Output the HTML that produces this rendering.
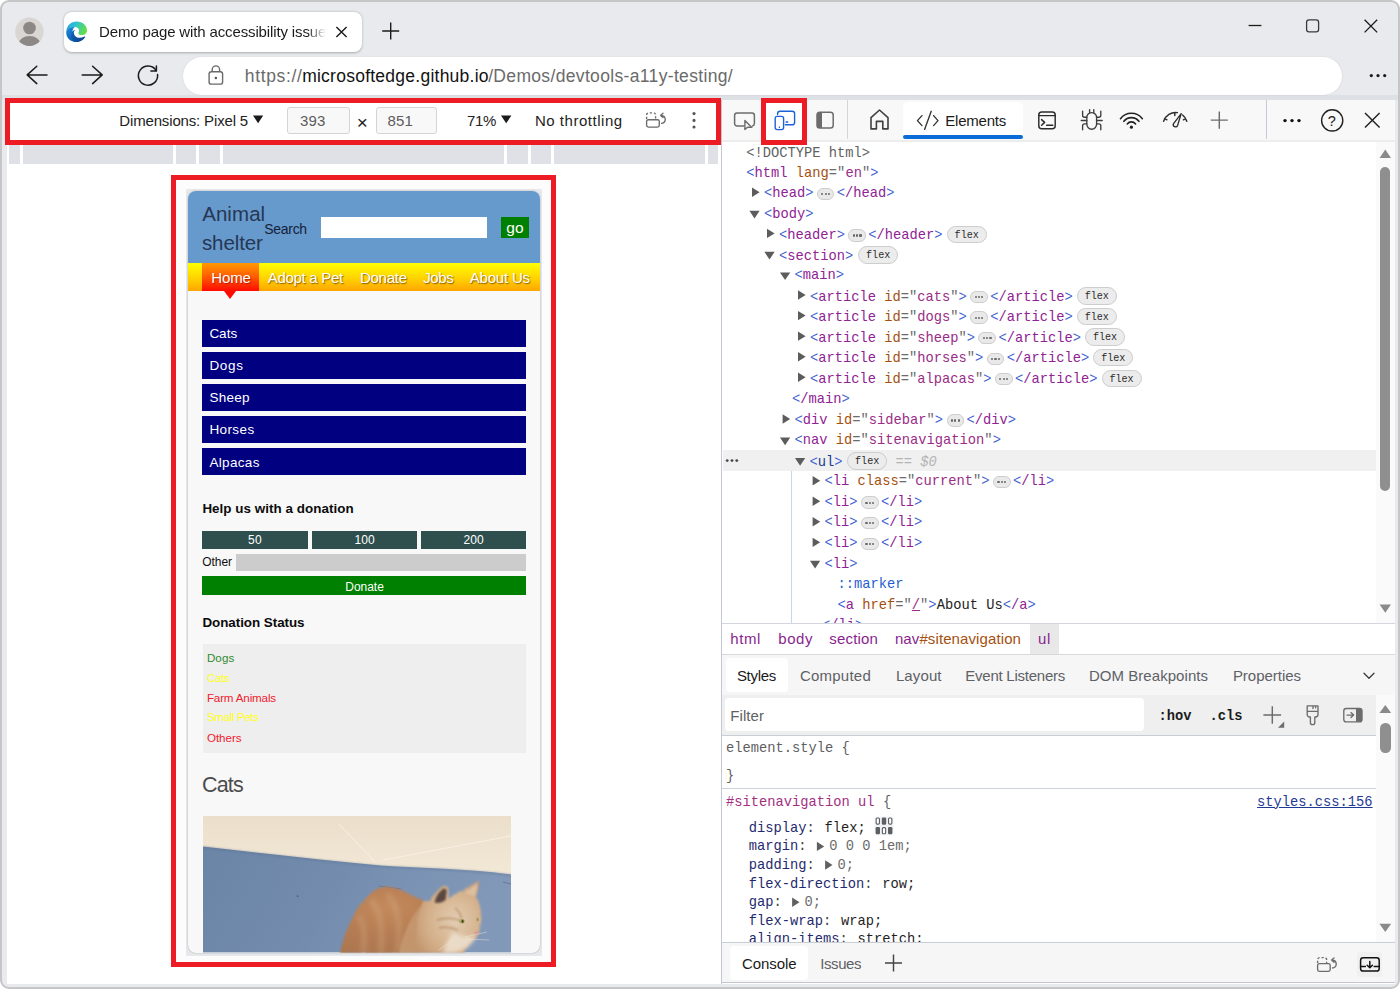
<!DOCTYPE html>
<html lang="en">
<head>
<meta charset="utf-8">
<title>Demo page with accessibility issues - DevTools device emulation</title>
<style>
html,body{margin:0;padding:0;background:#fff;}
body{width:1400px;height:989px;overflow:hidden;position:relative;font-family:"Liberation Sans", Arial, sans-serif;}
.t{position:absolute;white-space:pre;margin:0;padding:0;}
#win{position:absolute;left:0;top:0;width:1400px;height:989px;box-sizing:border-box;border:2px solid #c6c6c6;border-radius:9px;background:#e8eaed;overflow:hidden;}
#root{position:absolute;left:0;top:0;width:1400px;height:989px;overflow:hidden;}
.row{position:absolute;white-space:pre;font-family:"Liberation Mono", "DejaVu Sans Mono", monospace;font-size:13.75px;height:20.55px;line-height:20.55px;color:#222;}
.b{color:#3f5fd0}.tg{color:#8f2394}.an{color:#a5500f}.eq{color:#6b6b6b}.av{color:#9a2d86}
.pill{letter-spacing:0;display:inline-block;box-sizing:border-box;vertical-align:middle;width:17.6px;height:12.4px;border:1px solid #cdcdcd;background:#e9e9e9;border-radius:6.2px;margin:0 2.4px 2px 3.4px;position:relative;top:1.4px;}
.pill i{position:absolute;top:4.2px;width:2.2px;height:2.2px;border-radius:1.1px;background:#686868;}
.flex{display:inline-block;box-sizing:border-box;vertical-align:middle;width:40px;height:17.4px;line-height:18.6px;border:1px solid #cdcdcd;background:#ececec;border-radius:9px;margin:0 0 2.5px 4.1px;position:relative;top:0.6px;font-size:10.1px;text-align:center;color:#2b2b2b;letter-spacing:0;}
.tri{position:absolute;width:0;height:0;}
</style>
</head>
<body>
<div id="win"></div>
<div id="root">
<div style="position:absolute;left:2.00px;top:95.00px;width:1396.00px;height:4.50px;background:#dde0e5;"></div>
<div style="position:absolute;left:63.70px;top:11.80px;width:298.00px;height:40.20px;background:#fff;border-radius:8px;box-shadow:0 0.5px 2.5px rgba(0,0,0,.28);"></div>
<div style="position:absolute;left:95.00px;top:18.00px;width:232.00px;height:26.00px;overflow:hidden;-webkit-mask-image:linear-gradient(90deg,#000 0,#000 212px,transparent 231px);mask-image:linear-gradient(90deg,#000 0,#000 212px,transparent 231px);"><div class="t" id="tabtitle" style="left:4.00px;top:4.35px;height:19.50px;line-height:19.50px;font-size:15.00px;color:#1b1b1b;letter-spacing:-0.135px;">Demo page with accessibility issues</div></div>
<div style="position:absolute;left:183.00px;top:57.00px;width:1159.00px;height:38.00px;background:#fff;border-radius:19px;box-shadow:0 0 2px rgba(0,0,0,.10);"></div>
<div class="t" id="url1" style="left:244.85px;top:64.56px;height:22.75px;line-height:22.75px;font-size:17.50px;color:#6a6a6a;letter-spacing:0.643px;">https://</div>
<div class="t" id="url2" style="left:302.15px;top:64.56px;height:22.75px;line-height:22.75px;font-size:17.50px;color:#111;letter-spacing:0.249px;">microsoftedge.github.io</div>
<div class="t" id="url3" style="left:488.15px;top:64.56px;height:22.75px;line-height:22.75px;font-size:17.50px;color:#6a6a6a;letter-spacing:0.338px;">/Demos/devtools-a11y-testing/</div><svg style="position:absolute;left:0;top:0;pointer-events:none;" width="1400" height="989" viewBox="0 0 1400 989"><circle cx="29.4" cy="31.8" r="14.2" fill="#d9d6d3"/><clipPath id="avc"><circle cx="29.4" cy="31.8" r="14.2"/></clipPath><circle cx="29.5" cy="28" r="6.3" fill="#8b8886"/><ellipse cx="29.5" cy="43.8" rx="10.6" ry="7.8" fill="#8b8886" clip-path="url(#avc)"/><defs>
<linearGradient id="eg1" x1="0" y1="0" x2="1" y2="0.35"><stop offset="0" stop-color="#1e9fe6"/><stop offset="0.45" stop-color="#2cc3d5"/><stop offset="1" stop-color="#62dd4e"/></linearGradient>
<linearGradient id="eg2" x1="0" y1="0" x2="0.6" y2="1"><stop offset="0" stop-color="#1a8fe0"/><stop offset="1" stop-color="#0c55a8"/></linearGradient>
<linearGradient id="eg3" x1="0" y1="0" x2="1" y2="1"><stop offset="0" stop-color="#1467bf"/><stop offset="1" stop-color="#0b3f8a"/></linearGradient>
</defs><g transform="translate(66,21.6)"><path d="M0.3 9.6 C0.8 4 5.2 0 10.6 0 C16.8 0 21 4.2 21 8.6 C21 11.6 18.8 13.5 16 13.5 C13.6 13.5 12.3 12.7 12.3 11.7 C12.3 10.9 13.1 10.5 13.1 9.1 C13.1 7.1 11.3 5.4 8.7 5.4 C4.9 5.4 1.4 7.4 0.3 9.6Z" fill="url(#eg1)"/><path d="M0.3 9.6 C1.6 6.6 5 5.2 8.7 5.4 C7.2 6.3 6.3 8.4 6.4 10.8 C6.6 15.2 9.6 18.6 13.6 19.4 C12.4 20.2 11 20.5 9.8 20.4 C4 20.2 -0.4 15.6 0.3 9.6Z" fill="url(#eg2)"/><path d="M9.4 7.8 C8 8.8 7.4 10.8 8.2 12.8 C9.6 16.2 14 17.4 18.4 15 C18.9 14.7 19.4 15.2 19.1 15.7 C17.2 18.9 13.6 20.6 9.8 20.4 C6.8 19.8 5 16.6 5.2 12.8 C5.4 10.4 7.2 8.4 9.4 7.8Z" fill="url(#eg3)"/></g><path d="M336.4 26.9 L346.6 37.1 M346.6 26.9 L336.4 37.1" stroke="#1b1b1b" stroke-width="1.4" fill="none"/><path d="M382.2 31 H399.2 M390.7 22.5 V39.5" stroke="#1b1b1b" stroke-width="1.4" fill="none"/><path d="M1248.6 25.5 H1261.4" stroke="#1b1b1b" stroke-width="1.3" fill="none"/><rect x="1306.6" y="19.9" width="12" height="12" rx="2.4" stroke="#3a3a3a" stroke-width="1.3" fill="none"/><path d="M1364.6 19.8 L1377.2 32.4 M1377.2 19.8 L1364.6 32.4" stroke="#1b1b1b" stroke-width="1.3" fill="none"/><path d="M47 74.9 H27.6 M36.8 66.2 L27.2 74.9 L36.8 83.6" stroke="#1b1b1b" stroke-width="1.5" fill="none" stroke-linecap="round" stroke-linejoin="round"/><path d="M82.2 74.9 H101.8 M92.6 66.2 L102.2 74.9 L92.6 83.6" stroke="#1b1b1b" stroke-width="1.5" fill="none" stroke-linecap="round" stroke-linejoin="round"/><path d="M157.56 74.6 A9.6 9.6 0 1 1 156.2 70.6" stroke="#1b1b1b" stroke-width="1.5" fill="none" stroke-linecap="round" stroke-linejoin="round"/><path d="M156.4 65.9 V71 H150.9" stroke="#1b1b1b" stroke-width="1.5" fill="none" stroke-linecap="round" stroke-linejoin="round"/><rect x="209.1" y="71.7" width="13.5" height="12.4" rx="2.2" stroke="#6a6a6a" stroke-width="1.4" fill="none" stroke-linejoin="round"/><path d="M212.2 71.5 V69.6 A3.7 3.7 0 0 1 219.6 69.6 V71.5" stroke="#6a6a6a" stroke-width="1.4" fill="none" stroke-linejoin="round"/><circle cx="215.9" cy="78" r="1.25" fill="#555"/><circle cx="1371.3" cy="75.6" r="1.6" fill="#1b1b1b"/><circle cx="1378" cy="75.6" r="1.6" fill="#1b1b1b"/><circle cx="1384.7" cy="75.6" r="1.6" fill="#1b1b1b"/></svg><div style="position:absolute;left:7.00px;top:99.50px;width:714.50px;height:884.50px;background:#fff;"></div>
<div style="position:absolute;left:9.00px;top:144.40px;width:709.00px;height:19.20px;background:#dfe1e6;"><div style="position:absolute;left:11.00px;top:0.00px;width:2.50px;height:19.20px;background:#fff;"></div>
<div style="position:absolute;left:164.00px;top:0.00px;width:3.00px;height:19.20px;background:#fff;"></div>
<div style="position:absolute;left:187.00px;top:0.00px;width:2.50px;height:19.20px;background:#fff;"></div>
<div style="position:absolute;left:211.00px;top:0.00px;width:3.00px;height:19.20px;background:#fff;"></div>
<div style="position:absolute;left:495.00px;top:0.00px;width:3.00px;height:19.20px;background:#fff;"></div>
<div style="position:absolute;left:519.30px;top:0.00px;width:2.50px;height:19.20px;background:#fff;"></div>
<div style="position:absolute;left:542.00px;top:0.00px;width:3.00px;height:19.20px;background:#fff;"></div>
<div style="position:absolute;left:696.00px;top:0.00px;width:3.00px;height:19.20px;background:#fff;"></div></div>
<div class="t" id="dim" style="left:119.30px;top:111.45px;height:19.50px;line-height:19.50px;font-size:15.00px;color:#222;letter-spacing:-0.156px;">Dimensions: Pixel 5</div>
<div style="position:absolute;left:287.40px;top:107.40px;width:62.20px;height:26.60px;box-sizing:border-box;border:1px solid #d4d4d4;border-radius:3px;background:#f8f8f8;"></div>
<div class="t" id="w393" style="left:300.10px;top:111.45px;height:19.50px;line-height:19.50px;font-size:15.00px;color:#5c5c5c;letter-spacing:0.106px;">393</div>
<div class="t" id="times" style="left:356.86px;top:111.07px;height:24.70px;line-height:24.70px;font-size:19.00px;color:#222;letter-spacing:0.361px;">×</div>
<div style="position:absolute;left:376.00px;top:107.40px;width:60.60px;height:26.60px;box-sizing:border-box;border:1px solid #d4d4d4;border-radius:3px;background:#f8f8f8;"></div>
<div class="t" id="h851" style="left:387.50px;top:111.45px;height:19.50px;line-height:19.50px;font-size:15.00px;color:#5c5c5c;letter-spacing:0.173px;">851</div>
<div class="t" id="zoom" style="left:466.90px;top:111.45px;height:19.50px;line-height:19.50px;font-size:15.00px;color:#222;letter-spacing:-0.294px;">71%</div>
<div class="t" id="throt" style="left:534.90px;top:111.45px;height:19.50px;line-height:19.50px;font-size:15.00px;color:#222;letter-spacing:0.529px;">No throttling</div><svg style="position:absolute;left:0;top:0;pointer-events:none;" width="1400" height="989" viewBox="0 0 1400 989"><path d="M253 115.6 H263.2 L258.1 123.2 Z" fill="#1b1b1b"/><path d="M501 115.6 H511.4 L506.2 123.2 Z" fill="#1b1b1b"/><rect x="646.6" y="119.7" width="12.7" height="7.4" rx="1.8" stroke="#6a6a6a" stroke-width="1.35" fill="none" stroke-linejoin="round" stroke-linecap="round"/><path d="M646.6 119 V114.6 A2 2 0 0 1 648.6 112.9 H653.6 A2 2 0 0 1 655.6 114.6 V119" stroke="#6a6a6a" stroke-width="1.35" fill="none" stroke-dasharray="2.2 1.9"/><path d="M661.6 123.4 C666.6 122.6 666.4 115.8 661.2 115.4 M663 113.3 L660.6 115.4 L663 117.6" stroke="#6a6a6a" stroke-width="1.35" fill="none" stroke-linejoin="round" stroke-linecap="round"/><circle cx="694" cy="113.6" r="1.55" fill="#555"/><circle cx="694" cy="120.4" r="1.55" fill="#555"/><circle cx="694" cy="127" r="1.55" fill="#555"/></svg><div style="position:absolute;left:5.00px;top:97.80px;width:716.00px;height:47.00px;box-sizing:border-box;border:5px solid #ed1c24;"></div>
<div style="position:absolute;left:176.00px;top:180.00px;width:375.00px;height:782.00px;background:#fcfcfc;"></div>
<div style="position:absolute;left:186.00px;top:189.00px;width:356.00px;height:766.70px;background:#e6e8eb;overflow:hidden;"><div style="position:absolute;left:2.00px;top:2.30px;width:351.60px;height:762.00px;background:#f8f8f8;border-radius:8px;box-shadow:0 0 1.5px rgba(0,0,0,.35);"></div>
<div style="position:absolute;left:2.00px;top:2.30px;width:351.60px;height:72.00px;background:#6699cc;border-radius:8px 8px 0 0;"></div>
<div class="t" id="logo1" style="left:16.17px;top:11.97px;height:26.65px;line-height:26.65px;font-size:20.50px;color:#263754;letter-spacing:0.066px;font-weight:300;">Animal</div>
<div class="t" id="logo2" style="left:15.97px;top:40.97px;height:26.65px;line-height:26.65px;font-size:20.50px;color:#263754;letter-spacing:-0.095px;font-weight:300;">shelter</div>
<div class="t" id="search" style="left:78.36px;top:30.85px;height:18.20px;line-height:18.20px;font-size:14.00px;color:#14213a;letter-spacing:-0.323px;">Search</div>
<div style="position:absolute;left:135.00px;top:28.40px;width:166.00px;height:20.60px;background:#fff;"></div>
<div style="position:absolute;left:315.40px;top:28.40px;width:27.60px;height:20.60px;background:#008000;"></div>
<div class="t" id="go" style="left:320.27px;top:28.95px;height:20.15px;line-height:20.15px;font-size:15.50px;color:#fff;letter-spacing:0.182px;">go</div>
<div style="position:absolute;left:2.00px;top:74.00px;width:351.60px;height:28.00px;background:linear-gradient(#ffff00,#ffd200 55%,#ffa500);"></div>
<div style="position:absolute;left:16.40px;top:74.00px;width:56.20px;height:28.00px;background:linear-gradient(#ff9a00,#ff5a00 50%,#ff0a00);"></div>
<div style="position:absolute;left:37.60px;top:102.00px;width:0.00px;height:0.00px;width:0;height:0;border-left:6px solid transparent;border-right:6px solid transparent;border-top:8.2px solid #ff0a00;"></div>
<div class="t" id="n1" style="left:25.30px;top:79.05px;height:19.50px;line-height:19.50px;font-size:15.00px;color:#fff;letter-spacing:-0.116px;text-shadow:0.8px 0.8px 1.2px rgba(120,0,0,.6);">Home</div>
<div class="t" id="n2" style="left:81.70px;top:79.05px;height:19.50px;line-height:19.50px;font-size:15.00px;color:#fff;letter-spacing:-0.296px;text-shadow:0.8px 0.8px 1.2px rgba(90,50,0,.75);">Adopt a Pet</div>
<div class="t" id="n3" style="left:173.90px;top:79.05px;height:19.50px;line-height:19.50px;font-size:15.00px;color:#fff;letter-spacing:-0.237px;text-shadow:0.8px 0.8px 1.2px rgba(90,50,0,.75);">Donate</div>
<div class="t" id="n4" style="left:237.30px;top:79.05px;height:19.50px;line-height:19.50px;font-size:15.00px;color:#fff;letter-spacing:-0.434px;text-shadow:0.8px 0.8px 1.2px rgba(90,50,0,.75);">Jobs</div>
<div class="t" id="n5" style="left:283.70px;top:79.05px;height:19.50px;line-height:19.50px;font-size:15.00px;color:#fff;letter-spacing:-0.194px;text-shadow:0.8px 0.8px 1.2px rgba(90,50,0,.75);">About Us</div>
<div style="position:absolute;left:16.40px;top:131.00px;width:323.60px;height:27.00px;background:#000080;"></div>
<div class="t" id="cat0" style="left:23.39px;top:136.15px;height:17.55px;line-height:17.55px;font-size:13.50px;color:#fff;">Cats</div>
<div style="position:absolute;left:16.40px;top:163.10px;width:323.60px;height:27.00px;background:#000080;"></div>
<div class="t" id="cat1" style="left:23.39px;top:168.25px;height:17.55px;line-height:17.55px;font-size:13.50px;color:#fff;letter-spacing:0.710px;">Dogs</div>
<div style="position:absolute;left:16.40px;top:195.20px;width:323.60px;height:27.00px;background:#000080;"></div>
<div class="t" id="cat2" style="left:23.39px;top:200.35px;height:17.55px;line-height:17.55px;font-size:13.50px;color:#fff;letter-spacing:0.262px;">Sheep</div>
<div style="position:absolute;left:16.40px;top:227.30px;width:323.60px;height:27.00px;background:#000080;"></div>
<div class="t" id="cat3" style="left:23.39px;top:232.45px;height:17.55px;line-height:17.55px;font-size:13.50px;color:#fff;letter-spacing:0.398px;">Horses</div>
<div style="position:absolute;left:16.40px;top:259.40px;width:323.60px;height:27.00px;background:#000080;"></div>
<div class="t" id="cat4" style="left:23.39px;top:264.55px;height:17.55px;line-height:17.55px;font-size:13.50px;color:#fff;letter-spacing:0.332px;">Alpacas</div>
<div class="t" id="help" style="left:16.40px;top:311.05px;height:17.42px;line-height:17.42px;font-size:13.40px;color:#0b0b0b;font-weight:700;letter-spacing:0.046px;">Help us with a donation</div>
<div style="position:absolute;left:16.40px;top:341.60px;width:105.20px;height:18.80px;background:#2f4f4f;"></div>
<div class="t" id="amt0" style="left:61.98px;top:343.84px;height:15.60px;line-height:15.60px;font-size:12.00px;color:#fff;letter-spacing:0.400px;">50</div>
<div style="position:absolute;left:126.00px;top:341.60px;width:105.00px;height:18.80px;background:#2f4f4f;"></div>
<div class="t" id="amt1" style="left:168.48px;top:343.84px;height:15.60px;line-height:15.60px;font-size:12.00px;color:#fff;letter-spacing:0.043px;">100</div>
<div style="position:absolute;left:235.20px;top:341.60px;width:104.80px;height:18.80px;background:#2f4f4f;"></div>
<div class="t" id="amt2" style="left:277.48px;top:343.84px;height:15.60px;line-height:15.60px;font-size:12.00px;color:#fff;letter-spacing:0.110px;">200</div>
<div class="t" id="other" style="left:16.28px;top:365.84px;height:15.60px;line-height:15.60px;font-size:12.00px;color:#111;letter-spacing:-0.051px;">Other</div>
<div style="position:absolute;left:50.00px;top:365.00px;width:290.00px;height:17.00px;background:#cccccc;"></div>
<div style="position:absolute;left:16.40px;top:387.40px;width:323.60px;height:19.00px;background:#008000;"></div>
<div class="t" id="donate" style="left:159.28px;top:391.14px;height:15.60px;line-height:15.60px;font-size:12.00px;color:#fff;letter-spacing:-0.024px;">Donate</div>
<div class="t" id="dstat" style="left:16.40px;top:425.05px;height:17.42px;line-height:17.42px;font-size:13.40px;color:#0b0b0b;font-weight:700;letter-spacing:-0.035px;">Donation Status</div>
<div style="position:absolute;left:17.00px;top:455.40px;width:323.00px;height:109.00px;background:#eeeeee;"></div>
<div class="t" id="ds0" style="left:20.90px;top:460.84px;height:15.08px;line-height:15.08px;font-size:11.60px;color:#2e8b2e;letter-spacing:0.107px;">Dogs</div>
<div class="t" id="ds1" style="left:20.90px;top:480.84px;height:15.08px;line-height:15.08px;font-size:11.60px;color:#ffff1a;letter-spacing:-0.384px;">Cats</div>
<div class="t" id="ds2" style="left:20.90px;top:501.24px;height:15.08px;line-height:15.08px;font-size:11.60px;color:#f0202e;letter-spacing:-0.147px;">Farm Animals</div>
<div class="t" id="ds3" style="left:20.90px;top:520.44px;height:15.08px;line-height:15.08px;font-size:11.60px;color:#ffff1a;letter-spacing:-0.371px;">Small Pets</div>
<div class="t" id="ds4" style="left:20.90px;top:541.44px;height:15.08px;line-height:15.08px;font-size:11.60px;color:#f0202e;letter-spacing:-0.015px;">Others</div>
<div class="t" id="h2cats" style="left:15.91px;top:582.78px;height:27.95px;line-height:27.95px;font-size:21.50px;color:#4c4c4c;letter-spacing:-0.806px;font-weight:300;">Cats</div><svg style="position:absolute;left:16.70px;top:627.30px;" width="308.8" height="136.4" viewBox="0 0 308.8 136.4"><defs>
<linearGradient id="flr" x1="0" y1="0" x2="1" y2="0.25"><stop offset="0" stop-color="#6a84a6"/><stop offset="0.5" stop-color="#738cae"/><stop offset="1" stop-color="#8198b8"/></linearGradient>
<linearGradient id="wal" x1="0" y1="0" x2="0" y2="1"><stop offset="0" stop-color="#ebdfcb"/><stop offset="1" stop-color="#f2e8d6"/></linearGradient>
<radialGradient id="fur" cx="0.38" cy="0.3" r="0.85"><stop offset="0" stop-color="#c48a5c"/><stop offset="0.55" stop-color="#b47b52"/><stop offset="1" stop-color="#a8754f"/></radialGradient>
<radialGradient id="hd" cx="0.6" cy="0.55" r="0.75"><stop offset="0" stop-color="#e3cdb2"/><stop offset="0.6" stop-color="#d3ae88"/><stop offset="1" stop-color="#bf9068"/></radialGradient>
<filter id="bl" x="-10%" y="-10%" width="120%" height="120%"><feGaussianBlur stdDeviation="0.8"/></filter>
<filter id="bl2" x="-20%" y="-20%" width="140%" height="140%"><feGaussianBlur stdDeviation="2.2"/></filter>
<filter id="fz" x="-10%" y="-10%" width="120%" height="120%"><feTurbulence type="fractalNoise" baseFrequency="0.5 0.2" numOctaves="2" seed="4" result="n"/><feDisplacementMap in="SourceGraphic" in2="n" scale="2.2"/><feGaussianBlur stdDeviation="0.9"/></filter>
</defs><rect width="308.8" height="136.4" fill="url(#flr)"/><path d="M0 0 H308.8 V58.4 C262 52.4 222 52 178 49.4 C120 44.4 60 37.2 0 30.6 Z" fill="url(#wal)"/><path d="M0 31.4 C60 38 120 45.2 178 50.2 C222 52.8 262 53.2 308.8 59.2" stroke="#586d8e" stroke-width="1.6" fill="none" opacity=".5" filter="url(#bl)"/><path d="M136 8 L172 46 M180 44 L308 20" stroke="#fbf6ec" stroke-width="0.9" fill="none" opacity=".75"/><path d="M176 70 L198 73 M300 66 L308 68" stroke="#4e5f7c" stroke-width="0.7" fill="none" opacity=".7"/><circle cx="94.6" cy="80.2" r="0.9" fill="#44546e" opacity=".8"/><g filter="url(#fz)"><path d="M137 137 C140 122 145 110 150.2 100.8 C154 92 158 86.6 163 82.3 C168 76.6 173 72.6 178.7 71.6 C186 70.4 192 71.6 197.3 73.7 C203 76 208 78.6 211.6 80.8 L224 86 L262 137 Z" fill="url(#fur)"/><path d="M196 137 C200 120 206 104 216 92 C224 86 236 88 244 96 L262 137 Z" fill="#c79a72" opacity=".85"/><path d="M168 84 C176 92 180 108 178 137 M184 78 C196 90 198 112 194 137 M156 100 C162 110 162 124 160 137" stroke="#dcb791" stroke-width="5" fill="none" opacity=".3" filter="url(#bl2)"/><path d="M220.2 85.1 L227.3 85.1 C230 79 235 73.4 240.2 70.1 C242.6 69.4 244.6 70.4 245.2 72.3 L245.9 83 C249 80 252 78 254.4 76.6 L260.2 74.4 L275.9 64.4 C276 70 274.6 76 273 80.8 C276.4 86.4 278 92.6 278 99.4 C278.6 106 277.6 112.6 275.2 118 C273 123 269.6 126 265.9 128 L260.2 137 H214 C212 120 214 100 220.2 85.1 Z" fill="url(#hd)"/></g><path d="M231.6 86.6 C232.6 80.6 236.4 74.8 241 72.4 C243 72.4 243.8 74 243.6 76 L242.6 84 C239 86.6 235.6 87.4 231.6 86.6 Z" fill="#5c4740" filter="url(#bl)"/><path d="M262 77.2 L274.2 67.6 C274 72 273 76.6 271.4 80 Z" fill="#dcc0a2" filter="url(#bl)"/><path d="M234 104 C242 101 250 102 257 104.4 M236 112 C243 110.4 250 112 255 114.4 M252 92 C256 95 258 99 258.6 103" stroke="#a87850" stroke-width="1.5" fill="none" opacity=".65" filter="url(#bl)"/><ellipse cx="258.9" cy="105.2" rx="2.9" ry="2.3" fill="#b3aa66"/><ellipse cx="259.6" cy="105.2" rx="1" ry="1.7" fill="#4a4226"/><ellipse cx="274.6" cy="103.6" rx="1.2" ry="1.8" fill="#9f9858"/><path d="M271.6 116 C273 114.8 275.6 115 276.2 117.2 C275.4 119.4 273.2 119.8 271.6 118.4 Z" fill="#d59a96"/><path d="M250 116 C258 120 266 122 273 120 L268 128 C262 133 256 136 250 137 L240 137 C242 128 246 122 250 116 Z" fill="#efe4d4" opacity=".8" filter="url(#bl2)"/><path d="M262 121 L284 116 M262 123 L286 124 M250 124 L236 134" stroke="#f4eee4" stroke-width="0.6" fill="none" opacity=".7"/></svg></div>
<div style="position:absolute;left:171.00px;top:175.00px;width:385.00px;height:791.80px;box-sizing:border-box;border:5px solid #ed1c24;"></div>
<div style="position:absolute;left:721.50px;top:99.50px;width:673.50px;height:884.00px;background:#fff;"></div>
<div style="position:absolute;left:721.50px;top:99.50px;width:673.50px;height:40.00px;background:#f8f8f8;border-bottom:2px solid #ededed;box-sizing:content-box;"></div>
<div style="position:absolute;left:903.30px;top:102.40px;width:119.40px;height:36.40px;background:#fff;border-radius:5px 5px 0 0;"></div>
<div style="position:absolute;left:903.30px;top:134.80px;width:119.40px;height:3.90px;background:#0a6cd6;border-radius:2px;"></div>
<div class="t" id="elements" style="left:945.30px;top:111.45px;height:19.50px;line-height:19.50px;font-size:15.00px;color:#1b1b1b;letter-spacing:-0.223px;">Elements</div>
<div style="position:absolute;left:847.00px;top:100.00px;width:1.30px;height:39.00px;background:#d4d6dc;"></div>
<div style="position:absolute;left:1266.00px;top:100.00px;width:1.40px;height:39.00px;background:#c6c9d2;"></div>
<div style="position:absolute;left:766.00px;top:102.80px;width:36.00px;height:37.00px;background:#fff;"></div>
<div class="t" id="help_q" style="left:1327.73px;top:111.55px;height:18.85px;line-height:18.85px;font-size:14.50px;color:#222;">?</div>
<div style="position:absolute;left:761.00px;top:97.80px;width:46.00px;height:47.00px;box-sizing:border-box;border:5px solid #ed1c24;"></div>
<div style="position:absolute;left:721.50px;top:142.00px;width:654.20px;height:481.60px;overflow:hidden;"><div style="position:absolute;left:1.50px;top:308.00px;width:652.70px;height:20.60px;background:#f0f0f0;"></div>
<div style="position:absolute;left:69.50px;top:328.60px;width:1.00px;height:160.00px;background:#c9d6f2;"></div>
<div class="row" style="left:24.80px;top:1.57px;"><span style="color:#5f5f5f">&lt;!DOCTYPE html&gt;</span></div>
<div class="row" style="left:24.80px;top:22.12px;"><span class="b">&lt;</span><span class="tg">html</span> <span class="an">lang</span><span class="eq">="</span><span class="av">en</span><span class="eq">"</span><span class="b">&gt;</span></div>
<div class="row" style="left:42.40px;top:41.97px;"><span class="b">&lt;</span><span class="tg">head</span><span class="b">&gt;</span><span class="pill"><i style="left:3.4px"></i><i style="left:6.7px"></i><i style="left:10px"></i></span><span class="b">&lt;</span><span class="tg">/head</span><span class="b">&gt;</span></div>
<div class="row" style="left:42.40px;top:62.52px;"><span class="b">&lt;</span><span class="tg">body</span><span class="b">&gt;</span></div>
<div class="row" style="left:57.40px;top:83.07px;"><span class="b">&lt;</span><span class="tg">header</span><span class="b">&gt;</span><span class="pill"><i style="left:3.4px"></i><i style="left:6.7px"></i><i style="left:10px"></i></span><span class="b">&lt;</span><span class="tg">/header</span><span class="b">&gt;</span><span class="flex">flex</span></div>
<div class="row" style="left:57.40px;top:103.62px;"><span class="b">&lt;</span><span class="tg">section</span><span class="b">&gt;</span><span class="flex" style="margin-left:5px">flex</span></div>
<div class="row" style="left:73.00px;top:124.17px;"><span class="b">&lt;</span><span class="tg">main</span><span class="b">&gt;</span></div>
<div class="row" style="left:88.40px;top:144.72px;"><span class="b">&lt;</span><span class="tg">article</span> <span class="an">id</span><span class="eq">="</span><span class="av">cats</span><span class="eq">"</span><span class="b">&gt;</span><span class="pill"><i style="left:3.4px"></i><i style="left:6.7px"></i><i style="left:10px"></i></span><span class="b">&lt;</span><span class="tg">/article</span><span class="b">&gt;</span><span class="flex">flex</span></div>
<div class="row" style="left:88.40px;top:165.27px;"><span class="b">&lt;</span><span class="tg">article</span> <span class="an">id</span><span class="eq">="</span><span class="av">dogs</span><span class="eq">"</span><span class="b">&gt;</span><span class="pill"><i style="left:3.4px"></i><i style="left:6.7px"></i><i style="left:10px"></i></span><span class="b">&lt;</span><span class="tg">/article</span><span class="b">&gt;</span><span class="flex">flex</span></div>
<div class="row" style="left:88.40px;top:185.82px;"><span class="b">&lt;</span><span class="tg">article</span> <span class="an">id</span><span class="eq">="</span><span class="av">sheep</span><span class="eq">"</span><span class="b">&gt;</span><span class="pill"><i style="left:3.4px"></i><i style="left:6.7px"></i><i style="left:10px"></i></span><span class="b">&lt;</span><span class="tg">/article</span><span class="b">&gt;</span><span class="flex">flex</span></div>
<div class="row" style="left:88.40px;top:206.37px;"><span class="b">&lt;</span><span class="tg">article</span> <span class="an">id</span><span class="eq">="</span><span class="av">horses</span><span class="eq">"</span><span class="b">&gt;</span><span class="pill"><i style="left:3.4px"></i><i style="left:6.7px"></i><i style="left:10px"></i></span><span class="b">&lt;</span><span class="tg">/article</span><span class="b">&gt;</span><span class="flex">flex</span></div>
<div class="row" style="left:88.40px;top:226.92px;"><span class="b">&lt;</span><span class="tg">article</span> <span class="an">id</span><span class="eq">="</span><span class="av">alpacas</span><span class="eq">"</span><span class="b">&gt;</span><span class="pill"><i style="left:3.4px"></i><i style="left:6.7px"></i><i style="left:10px"></i></span><span class="b">&lt;</span><span class="tg">/article</span><span class="b">&gt;</span><span class="flex">flex</span></div>
<div class="row" style="left:70.40px;top:248.17px;"><span class="b">&lt;</span><span class="tg">/main</span><span class="b">&gt;</span></div>
<div class="row" style="left:73.00px;top:268.72px;"><span class="b">&lt;</span><span class="tg">div</span> <span class="an">id</span><span class="eq">="</span><span class="av">sidebar</span><span class="eq">"</span><span class="b">&gt;</span><span class="pill"><i style="left:3.4px"></i><i style="left:6.7px"></i><i style="left:10px"></i></span><span class="b">&lt;</span><span class="tg">/div</span><span class="b">&gt;</span></div>
<div class="row" style="left:73.00px;top:289.27px;"><span class="b">&lt;</span><span class="tg">nav</span> <span class="an">id</span><span class="eq">="</span><span class="av">sitenavigation</span><span class="eq">"</span><span class="b">&gt;</span></div>
<div class="row" style="left:88.00px;top:309.82px;"><span class="b">&lt;</span><span style="color:#203a8f">ul</span><span class="b">&gt;</span><span class="flex" style="margin-left:4.6px">flex</span><span style="color:#b4b4b4"> == <i>$0</i></span></div>
<div class="row" style="left:103.00px;top:330.37px;"><span class="b">&lt;</span><span class="tg">li</span> <span class="an">class</span><span class="eq">="</span><span class="av">current</span><span class="eq">"</span><span class="b">&gt;</span><span class="pill"><i style="left:3.4px"></i><i style="left:6.7px"></i><i style="left:10px"></i></span><span class="b">&lt;</span><span class="tg">/li</span><span class="b">&gt;</span></div>
<div class="row" style="left:103.00px;top:350.92px;"><span class="b">&lt;</span><span class="tg">li</span><span class="b">&gt;</span><span class="pill"><i style="left:3.4px"></i><i style="left:6.7px"></i><i style="left:10px"></i></span><span class="b">&lt;</span><span class="tg">/li</span><span class="b">&gt;</span></div>
<div class="row" style="left:103.00px;top:371.47px;"><span class="b">&lt;</span><span class="tg">li</span><span class="b">&gt;</span><span class="pill"><i style="left:3.4px"></i><i style="left:6.7px"></i><i style="left:10px"></i></span><span class="b">&lt;</span><span class="tg">/li</span><span class="b">&gt;</span></div>
<div class="row" style="left:103.00px;top:392.02px;"><span class="b">&lt;</span><span class="tg">li</span><span class="b">&gt;</span><span class="pill"><i style="left:3.4px"></i><i style="left:6.7px"></i><i style="left:10px"></i></span><span class="b">&lt;</span><span class="tg">/li</span><span class="b">&gt;</span></div>
<div class="row" style="left:103.00px;top:412.57px;"><span class="b">&lt;</span><span class="tg">li</span><span class="b">&gt;</span></div>
<div class="row" style="left:116.00px;top:433.12px;"><span style="color:#1f5fcf">::marker</span></div>
<div class="row" style="left:116.00px;top:453.67px;"><span class="b">&lt;</span><span class="tg">a</span> <span class="an">href</span><span class="eq">="</span><span class="av" style="text-decoration:underline">/</span><span class="eq">"</span><span class="b">&gt;</span><span style="color:#222">About Us</span><span class="b">&lt;</span><span class="tg">/a</span><span class="b">&gt;</span></div>
<div class="row" style="left:100.40px;top:474.22px;"><span class="b">&lt;</span><span class="tg">/li</span><span class="b">&gt;</span></div></div>
<div style="position:absolute;left:1375.70px;top:142.00px;width:19.30px;height:481.60px;background:#fafafa;"></div>
<div style="position:absolute;left:1380.10px;top:167.40px;width:10.40px;height:323.80px;background:#8f8f8f;border-radius:5.2px;"></div>
<div style="position:absolute;left:721.50px;top:623.20px;width:673.50px;height:1.00px;background:#d3d6de;"></div>
<div style="position:absolute;left:721.50px;top:654.20px;width:673.50px;height:1.00px;background:#d9d9d9;"></div>
<div style="position:absolute;left:1029.60px;top:624.20px;width:29.80px;height:30.00px;background:#e8e8e8;"></div>
<div class="t" id="bc1" style="left:730.30px;top:629.45px;height:19.50px;line-height:19.50px;font-size:15.00px;color:#8a1f8e;letter-spacing:0.602px;">html</div>
<div class="t" id="bc2" style="left:778.30px;top:629.45px;height:19.50px;line-height:19.50px;font-size:15.00px;color:#8a1f8e;letter-spacing:0.555px;">body</div>
<div class="t" id="bc3" style="left:829.30px;top:629.45px;height:19.50px;line-height:19.50px;font-size:15.00px;color:#8a1f8e;letter-spacing:0.174px;">section</div>
<div class="t" id="bc4" style="left:894.90px;top:629.45px;height:19.50px;line-height:19.50px;font-size:15.00px;color:#8a1f8e;letter-spacing:0.105px;">nav<span style="color:#a5500f">#sitenavigation</span></div>
<div class="t" id="bc5" style="left:1037.90px;top:629.45px;height:19.50px;line-height:19.50px;font-size:15.00px;color:#8a1f8e;letter-spacing:0.731px;">ul</div>
<div style="position:absolute;left:721.50px;top:655.20px;width:673.50px;height:40.00px;background:#f6f6f6;"></div>
<div style="position:absolute;left:725.60px;top:657.60px;width:62.40px;height:34.00px;background:#fff;border-radius:4px;"></div>
<div class="t" id="tb1" style="left:736.90px;top:666.45px;height:19.50px;line-height:19.50px;font-size:15.00px;color:#1b1b1b;letter-spacing:-0.285px;">Styles</div>
<div class="t" id="tb2" style="left:799.90px;top:666.45px;height:19.50px;line-height:19.50px;font-size:15.00px;color:#5e6166;letter-spacing:0.241px;">Computed</div>
<div class="t" id="tb3" style="left:895.90px;top:666.45px;height:19.50px;line-height:19.50px;font-size:15.00px;color:#5e6166;letter-spacing:0.117px;">Layout</div>
<div class="t" id="tb4" style="left:965.30px;top:666.45px;height:19.50px;line-height:19.50px;font-size:15.00px;color:#5e6166;letter-spacing:-0.243px;">Event Listeners</div>
<div class="t" id="tb5" style="left:1088.90px;top:666.45px;height:19.50px;line-height:19.50px;font-size:15.00px;color:#5e6166;letter-spacing:0.052px;">DOM Breakpoints</div>
<div class="t" id="tb6" style="left:1232.90px;top:666.45px;height:19.50px;line-height:19.50px;font-size:15.00px;color:#5e6166;letter-spacing:-0.022px;">Properties</div>
<div style="position:absolute;left:721.50px;top:695.20px;width:654.50px;height:40.30px;background:#efefef;border-bottom:1px solid #c9cdd6;"></div>
<div style="position:absolute;left:725.00px;top:698.00px;width:418.60px;height:33.00px;background:#fff;border-radius:4px;"></div>
<div class="t" id="filter" style="left:730.30px;top:706.45px;height:19.50px;line-height:19.50px;font-size:15.00px;color:#5f5f5f;letter-spacing:0.068px;">Filter</div>
<div class="t" id="hov" style="left:1158.40px;top:707.79px;height:17.88px;line-height:17.88px;font-size:13.75px;color:#1b1b1b;font-weight:700;font-family:'Liberation Mono','DejaVu Sans Mono',monospace;">:hov</div>
<div class="t" id="cls" style="left:1209.50px;top:707.79px;height:17.88px;line-height:17.88px;font-size:13.75px;color:#1b1b1b;font-weight:700;font-family:'Liberation Mono','DejaVu Sans Mono',monospace;">.cls</div>
<div class="row" style="left:726.10px;top:739.94px;height:18.6px;line-height:18.6px;"><span style="color:#5f5f5f">element.style {</span></div>
<div class="row" style="left:726.10px;top:767.64px;height:18.6px;line-height:18.6px;"><span style="color:#5f5f5f">}</span></div>
<div style="position:absolute;left:721.50px;top:788.20px;width:654.50px;height:1.00px;background:#cdd1d9;"></div>
<div class="row" style="left:726.10px;top:793.74px;height:18.6px;line-height:18.6px;"><span style="color:#a3307f">#sitenavigation ul</span><span style="color:#5f5f5f"> {</span></div>
<div class="row" style="left:1257.10px;top:793.64px;height:18.6px;line-height:18.6px;"><span style="color:#1f3a93;text-decoration:underline">styles.css:156</span></div>
<div style="position:absolute;left:721.50px;top:810.00px;width:654.50px;height:132.00px;overflow:hidden;"><div class="row" style="left:27.20px;top:9.74px;height:18.6px;line-height:18.6px;"><span style="color:#1f2b6e">display</span><span style="color:#444">:</span><span style="color:#1f1f1f;margin-left:1.6px"> flex;</span></div>
<div class="row" style="left:27.20px;top:28.34px;height:18.6px;line-height:18.6px;"><span style="color:#1f2b6e">margin</span><span style="color:#444">:</span><span style="display:inline-block;width:22.9px"></span><span style="color:#6b6b6b">0 0 0 1em;</span></div>
<div class="row" style="left:27.20px;top:46.94px;height:18.6px;line-height:18.6px;"><span style="color:#1f2b6e">padding</span><span style="color:#444">:</span><span style="display:inline-block;width:22.9px"></span><span style="color:#6b6b6b">0;</span></div>
<div class="row" style="left:27.20px;top:65.54px;height:18.6px;line-height:18.6px;"><span style="color:#1f2b6e">flex-direction</span><span style="color:#444">:</span><span style="color:#1f1f1f;margin-left:1.6px"> row;</span></div>
<div class="row" style="left:27.20px;top:84.14px;height:18.6px;line-height:18.6px;"><span style="color:#1f2b6e">gap</span><span style="color:#444">:</span><span style="display:inline-block;width:22.9px"></span><span style="color:#6b6b6b">0;</span></div>
<div class="row" style="left:27.20px;top:102.74px;height:18.6px;line-height:18.6px;"><span style="color:#1f2b6e">flex-wrap</span><span style="color:#444">:</span><span style="color:#1f1f1f;margin-left:1.6px"> wrap;</span></div>
<div class="row" style="left:27.20px;top:121.34px;height:18.6px;line-height:18.6px;"><span style="color:#1f2b6e">align-items</span><span style="color:#444">:</span><span style="color:#1f1f1f;margin-left:1.6px"> stretch;</span></div></div>
<div style="position:absolute;left:1376.00px;top:695.20px;width:19.00px;height:246.80px;background:#fafafa;"></div>
<div style="position:absolute;left:1380.20px;top:723.40px;width:10.40px;height:29.80px;background:#8f8f8f;border-radius:5.2px;"></div>
<div style="position:absolute;left:721.50px;top:942.00px;width:673.50px;height:41.40px;box-sizing:border-box;background:#f6f6f6;border-top:1px solid #c9cdd6;border-bottom:1.4px solid #c2c5cc;"></div>
<div style="position:absolute;left:730.40px;top:946.00px;width:77.60px;height:34.00px;background:#fff;border-radius:4px;"></div>
<div class="t" id="dr1" style="left:741.90px;top:953.85px;height:19.50px;line-height:19.50px;font-size:15.00px;color:#1b1b1b;letter-spacing:-0.042px;">Console</div>
<div class="t" id="dr2" style="left:820.30px;top:953.85px;height:19.50px;line-height:19.50px;font-size:15.00px;color:#5e6166;letter-spacing:-0.435px;">Issues</div>
<div style="position:absolute;left:1357.40px;top:952.20px;width:24.40px;height:24.60px;background:#f0f0f0;border-radius:3px;"></div>
<div style="position:absolute;left:721.30px;top:99.50px;width:1.20px;height:884.00px;background:#c3c7d1;"></div><svg style="position:absolute;left:0;top:0;pointer-events:none;" width="1400" height="989" viewBox="0 0 1400 989"><path d="M744 126 H737 A2.4 2.4 0 0 1 734.6 123.6 V115.4 A2.4 2.4 0 0 1 737 113 H752 A2.4 2.4 0 0 1 754.4 115.4 V123.6 A2.4 2.4 0 0 1 752.6 125.9" stroke="#6c6c6c" stroke-width="1.5" fill="none" stroke-linejoin="round" stroke-linecap="round"/><path d="M744.9 120.4 V129.6 L747.6 127.2 L751.8 127.4 Z" stroke="#6c6c6c" stroke-width="1.4" fill="#f8f8f8" stroke-linejoin="round"/><path d="M777.6 114.6 V113.6 A2.4 2.4 0 0 1 780 111.2 H792.2 A2.4 2.4 0 0 1 794.6 113.6 V122.4 A2.4 2.4 0 0 1 792.2 124.8 H785.4" stroke="#1b62d9" stroke-width="1.4" fill="none" stroke-linejoin="round" stroke-linecap="round"/><rect x="775.2" y="116.4" width="8.4" height="13.2" rx="2" stroke="#1b62d9" stroke-width="1.4" fill="none" stroke-linejoin="round" stroke-linecap="round"/><path d="M785.6 122.1 H788.2 M778.8 127.2 H780" stroke="#1b62d9" stroke-width="1.5" fill="none"/><rect x="817" y="112.3" width="16.2" height="15.8" rx="2.8" stroke="#6c6c6c" stroke-width="1.5" fill="none" stroke-linejoin="round" stroke-linecap="round"/><path d="M819.8 112.3 H822 V128.1 H819.8 A2.8 2.8 0 0 1 817 125.3 V115.1 A2.8 2.8 0 0 1 819.8 112.3 Z" fill="#6c6c6c"/><path d="M879.5 110 L871 117.6 V128.9 H876.4 V121.4 H882.8 V128.9 H888 V117.6 Z" stroke="#404040" stroke-width="1.6" fill="none" stroke-linejoin="round"/><path d="M922 115.6 L917.4 120.6 L922 125.6 M924.6 129.4 L931.2 111.3 M933.6 115.6 L938 120.6 L933.6 125.6" stroke="#333" stroke-width="1.35" fill="none" stroke-linecap="round" stroke-linejoin="round"/><rect x="1038.8" y="112" width="16.4" height="16.8" rx="3" stroke="#2b2b2b" stroke-width="1.45" fill="none" stroke-linejoin="round" stroke-linecap="round"/><path d="M1038.8 115.6 H1055.2 M1041.6 119.6 L1044.6 122.4 L1041.6 125.2 M1046.6 125.2 H1052.8" stroke="#2b2b2b" stroke-width="1.45" fill="none" stroke-linejoin="round" stroke-linecap="round"/><rect x="1086.8" y="112.6" width="9.8" height="16.6" rx="4.9" stroke="#3c3c3c" stroke-width="1.35" fill="none" stroke-linejoin="round" stroke-linecap="round"/><path d="M1089.6 109.6 V112.9 M1093.8 109.6 V112.9 M1086.8 117.2 H1084.6 A2 2 0 0 1 1082.6 115.2 V111.2 M1096.6 117.2 H1098.8 A2 2 0 0 0 1100.8 115.2 V111.2 M1081.2 120.5 H1086.8 M1096.6 120.5 H1102.2 M1086.8 123.8 H1084.6 A2 2 0 0 0 1082.6 125.8 V129.8 M1096.6 123.8 H1098.8 A2 2 0 0 1 1100.8 125.8 V129.8" stroke="#3c3c3c" stroke-width="1.35" fill="none" stroke-linejoin="round" stroke-linecap="round"/><path d="M1127.22 123.94 A5.30 5.30 0 0 1 1135.58 123.94" stroke="#222" stroke-width="1.6" fill="none" stroke-linecap="round"/><path d="M1123.84 121.29 A9.60 9.60 0 0 1 1138.96 121.29" stroke="#222" stroke-width="1.6" fill="none" stroke-linecap="round"/><path d="M1120.45 118.64 A13.90 13.90 0 0 1 1142.35 118.64" stroke="#222" stroke-width="1.6" fill="none" stroke-linecap="round"/><circle cx="1131.4" cy="127.2" r="1.6" fill="#222"/><path d="M1163.6 121.2 A12.6 12.6 0 0 1 1177.4 112.6 M1182.6 115 A12.6 12.6 0 0 1 1186.8 121.2 M1164.6 118.6 L1167 119.8 M1174.8 113 V115.4 M1185.4 118.6 L1183.4 119.8" stroke="#2b2b2b" stroke-width="1.45" fill="none" stroke-linejoin="round" stroke-linecap="round"/><path d="M1181.2 113.6 L1177.6 125.4 A2.2 2.2 0 0 1 1173.4 123.8 Z" stroke="#2b2b2b" stroke-width="1.35" fill="none" stroke-linejoin="round"/><path d="M1210.8 120.1 H1227.8 M1219.3 111.6 V128.7" stroke="#6c6c6c" stroke-width="1.45" fill="none"/><circle cx="1285" cy="120.6" r="1.7" fill="#111"/><circle cx="1292" cy="120.6" r="1.7" fill="#111"/><circle cx="1299" cy="120.6" r="1.7" fill="#111"/><circle cx="1332.2" cy="120.4" r="10.6" stroke="#222" stroke-width="1.4" fill="none"/><path d="M1365 112.9 L1379.6 127.5 M1379.6 112.9 L1365 127.5" stroke="#222" stroke-width="1.45" fill="none"/><circle cx="727.2" cy="460.6" r="1.45" fill="#4a4a4a"/><circle cx="732" cy="460.6" r="1.45" fill="#4a4a4a"/><circle cx="736.8" cy="460.6" r="1.45" fill="#4a4a4a"/><path d="M752.00 187.60 v9.4 l7.6 -4.7 z" fill="#5c5c5c"/><path d="M749.40 210.75 h10.2 l-5.1 7.7 z" fill="#5c5c5c"/><path d="M767.00 228.70 v9.4 l7.6 -4.7 z" fill="#5c5c5c"/><path d="M764.40 251.85 h10.2 l-5.1 7.7 z" fill="#5c5c5c"/><path d="M780.00 272.40 h10.2 l-5.1 7.7 z" fill="#5c5c5c"/><path d="M798.00 290.35 v9.4 l7.6 -4.7 z" fill="#5c5c5c"/><path d="M798.00 310.90 v9.4 l7.6 -4.7 z" fill="#5c5c5c"/><path d="M798.00 331.45 v9.4 l7.6 -4.7 z" fill="#5c5c5c"/><path d="M798.00 352.00 v9.4 l7.6 -4.7 z" fill="#5c5c5c"/><path d="M798.00 372.55 v9.4 l7.6 -4.7 z" fill="#5c5c5c"/><path d="M782.60 414.35 v9.4 l7.6 -4.7 z" fill="#5c5c5c"/><path d="M780.00 437.50 h10.2 l-5.1 7.7 z" fill="#5c5c5c"/><path d="M795.00 458.05 h10.2 l-5.1 7.7 z" fill="#5c5c5c"/><path d="M812.60 476.00 v9.4 l7.6 -4.7 z" fill="#5c5c5c"/><path d="M812.60 496.55 v9.4 l7.6 -4.7 z" fill="#5c5c5c"/><path d="M812.60 517.10 v9.4 l7.6 -4.7 z" fill="#5c5c5c"/><path d="M812.60 537.65 v9.4 l7.6 -4.7 z" fill="#5c5c5c"/><path d="M810.00 560.80 h10.2 l-5.1 7.7 z" fill="#5c5c5c"/><path d="M1379.6 158 L1385.3 149.6 L1391 158 Z" fill="#8a8a8a"/><path d="M1379.6 604.4 L1385.3 612.8 L1391 604.4 Z" fill="#8a8a8a"/><path d="M1364 673.2 L1369 678.2 L1374 673.2" stroke="#3a3a3a" stroke-width="1.3" fill="none" stroke-linecap="round" stroke-linejoin="round"/><path d="M1263.4 715 H1281.1 M1272.3 706.3 V723.7" stroke="#6c6c6c" stroke-width="1.45" fill="none"/><path d="M1284.2 721.6 V727.8 H1278 Z" fill="#6c6c6c"/><path d="M1307.2 705.8 H1318 V714.6 A2.4 2.4 0 0 1 1315.6 717 H1314.8 V722.4 A2.2 2.2 0 0 1 1310.4 722.4 V717 H1309.6 A2.4 2.4 0 0 1 1307.2 714.6 Z M1307.2 711.4 H1318 M1313 705.8 V708.6 M1315.6 705.8 V707.8" stroke="#6c6c6c" stroke-width="1.35" fill="none" stroke-linejoin="round" stroke-linecap="round"/><rect x="1343.8" y="708.5" width="18.2" height="13.3" rx="2.4" stroke="#6c6c6c" stroke-width="1.35" fill="none" stroke-linejoin="round" stroke-linecap="round"/><path d="M1356 708.5 H1359.6 A2.4 2.4 0 0 1 1362 710.9 V719.4 A2.4 2.4 0 0 1 1359.6 721.8 H1356 Z" fill="#6c6c6c"/><path d="M1347 715.1 H1353.4 M1351 712.6 L1353.6 715.1 L1351 717.6" stroke="#6c6c6c" stroke-width="1.35" fill="none" stroke-linejoin="round" stroke-linecap="round"/><path d="M816.85 841.70 v9.4 l7.4 -4.7 z" fill="#606060"/><path d="M825.10 860.30 v9.4 l7.4 -4.7 z" fill="#606060"/><path d="M792.10 897.50 v9.4 l7.4 -4.7 z" fill="#606060"/><rect x="874.6" y="816.4" width="18.8" height="18.9" rx="2.5" fill="#f1f2f5"/><rect x="876.15" y="817.95" width="3.3" height="6.2" rx="1.1" fill="#fff" stroke="#5c6065" stroke-width="1.15"/><rect x="875.6" y="827" width="4.4" height="7.3" rx="1.3" fill="#5c6065"/><rect x="881.8" y="817.4" width="4.4" height="7.3" rx="1.3" fill="#5c6065"/><rect x="882.35" y="827.55" width="3.3" height="6.2" rx="1.1" fill="#fff" stroke="#5c6065" stroke-width="1.15"/><rect x="888.55" y="817.95" width="3.3" height="6.2" rx="1.1" fill="#fff" stroke="#5c6065" stroke-width="1.15"/><rect x="888" y="827" width="4.4" height="7.3" rx="1.3" fill="#5c6065"/><path d="M1379.4 713 L1385.3 704.9 L1391.2 713 Z" fill="#8a8a8a"/><path d="M1379.4 923.8 L1385.3 931.9 L1391.2 923.8 Z" fill="#8a8a8a"/><path d="M885 963 H902 M893.5 954.5 V971.5" stroke="#444" stroke-width="1.45" fill="none"/><rect x="1317.6" y="963.6" width="12.6" height="7.8" rx="1.8" stroke="#6c6c6c" stroke-width="1.35" fill="none" stroke-linejoin="round" stroke-linecap="round"/><path d="M1317.6 963 V959.4 A2 2 0 0 1 1319.6 957.6 H1324.6 A2 2 0 0 1 1326.6 959.4 V963" stroke="#6c6c6c" stroke-width="1.35" fill="none" stroke-dasharray="2.2 1.9"/><path d="M1332.6 968 C1337.6 967.2 1337.4 960.4 1332.2 960 M1334 957.9 L1331.6 960 L1334 962.2" stroke="#6c6c6c" stroke-width="1.35" fill="none" stroke-linejoin="round" stroke-linecap="round"/><rect x="1360.6" y="957.8" width="18.6" height="13.2" rx="2.6" stroke="#111" stroke-width="1.5" fill="none" stroke-linejoin="round" stroke-linecap="round"/><path d="M1360.6 966.4 H1365.4 M1374.2 966.4 H1379.2 M1369.8 961.4 V967.6 M1367.2 965.2 L1369.8 967.8 L1372.4 965.2" stroke="#111" stroke-width="1.5" fill="none" stroke-linejoin="round" stroke-linecap="round"/></svg>
</div>
</body>
</html>
